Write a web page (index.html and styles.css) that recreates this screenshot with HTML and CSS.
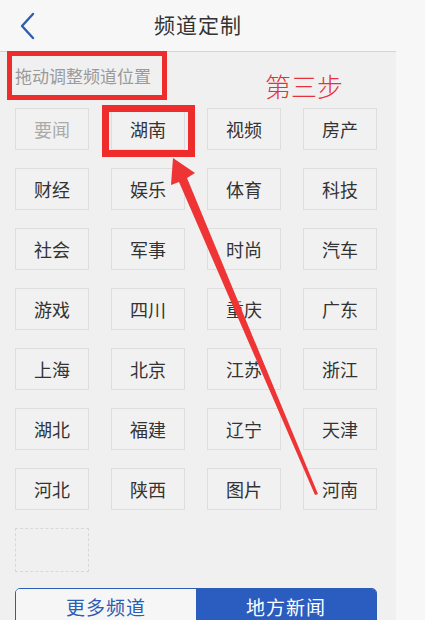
FILE: index.html
```html
<!DOCTYPE html>
<html lang="zh-CN">
<head>
<meta charset="utf-8">
<title>频道定制</title>
<link rel="stylesheet" href="styles.css">
</head>
<body>
<div class="page">
  <div class="main">
    <header class="header">
      <div class="back">
        <svg width="18" height="28" viewBox="0 0 18 28"><path d="M15 2 L4 14 L15 26" fill="none" stroke="#2d5db3" stroke-width="2.4" stroke-linecap="round" stroke-linejoin="round"/></svg>
      </div>
      <h1 class="title">频道定制</h1>
      <div></div>
    </header>
    <div class="hint">拖动调整频道位置</div>
    <div class="grid">
      <div class="tile fixed">要闻</div>
      <div class="tile">湖南</div>
      <div class="tile">视频</div>
      <div class="tile">房产</div>
      <div class="tile">财经</div>
      <div class="tile">娱乐</div>
      <div class="tile">体育</div>
      <div class="tile">科技</div>
      <div class="tile">社会</div>
      <div class="tile">军事</div>
      <div class="tile">时尚</div>
      <div class="tile">汽车</div>
      <div class="tile">游戏</div>
      <div class="tile">四川</div>
      <div class="tile">重庆</div>
      <div class="tile">广东</div>
      <div class="tile">上海</div>
      <div class="tile">北京</div>
      <div class="tile">江苏</div>
      <div class="tile">浙江</div>
      <div class="tile">湖北</div>
      <div class="tile">福建</div>
      <div class="tile">辽宁</div>
      <div class="tile">天津</div>
      <div class="tile">河北</div>
      <div class="tile">陕西</div>
      <div class="tile">图片</div>
      <div class="tile">河南</div>
      <div class="tile empty"></div>
    </div>
    <div class="segment">
      <div class="seg">更多频道</div>
      <div class="seg active">地方新闻</div>
    </div>
  </div>
  <div class="side"></div>
</div>
<div class="overlay">
  <div class="mark mark-hint"></div>
  <div class="mark mark-tile"></div>
  <div class="step">第三步</div>
  <svg class="arrow" width="425" height="620" viewBox="0 0 425 620">
    <polygon points="173,158 195,173 187,178 318,494 315,495 179,182 171,185" fill="#ee3434"/>
  </svg>
</div>
</body>
</html>
```
FILE: styles.css
```css
html, body {
  margin: 0;
  padding: 0;
}
body {
  width: 425px;
  height: 620px;
  overflow: hidden;
  background: #f7f7f7;
  font-family: "Noto Sans CJK SC", "Noto Sans", sans-serif;
  position: relative;
}
.page {
  display: flex;
  height: 620px;
}
.main {
  width: 396px;
  background: #f0f0f0;
  height: 620px;
}
.side {
  flex: 1;
  background: #f7f7f7;
}
.header {
  height: 48px;
  padding-bottom: 3px;
  border-bottom: 1px solid #d4d4d4;
  background: #f7f7f7;
  display: grid;
  grid-template-columns: 1fr auto 1fr;
  align-items: center;
}
.back {
  padding-left: 18px;
  padding-top: 4px;
  display: flex;
}
.title {
  margin: 0;
  font-size: 21px;
  font-weight: 400;
  color: #333;
  letter-spacing: 1px;
}
.hint {
  height: 44px;
  padding: 12px 0 0 15px;
  font-size: 17px;
  line-height: 24px;
  color: #9a9a9a;
}
.grid {
  display: grid;
  grid-template-columns: repeat(4, 74px);
  column-gap: 22px;
  row-gap: 18px;
  padding: 0 15px;
}
.tile {
  height: 42px;
  box-sizing: border-box;
  border: 1px solid #dedede;
  background: #f1f1f1;
  display: flex;
  align-items: center;
  justify-content: center;
  font-size: 18px;
  color: #333;
}
.tile.fixed {
  color: #aaa;
}
.tile.empty {
  height: 44px;
  border: 1px dashed #d8d8d8;
  background: transparent;
}
.segment {
  margin: 16px 19px 0 15px;
  display: flex;
  height: 40px;
  border: 1px solid #2c5db5;
  border-radius: 5px;
  overflow: hidden;
}
.seg {
  flex: 1;
  display: flex;
  align-items: flex-start;
  padding-top: 4px;
  justify-content: center;
  font-size: 19px;
  letter-spacing: 1px;
  color: #2c5db5;
  background: #f6f6f6;
}
.seg.active {
  background: #2b5cbf;
  color: #fff;
}
.overlay {
  position: absolute;
  inset: 0;
  pointer-events: none;
}
.mark {
  position: absolute;
  box-sizing: border-box;
  border-style: solid;
  border-color: #ee2c2c;
}
.mark-hint {
  left: 7px;
  top: 51px;
  width: 160px;
  height: 49px;
  border-width: 5px;
}
.mark-tile {
  left: 102px;
  top: 105px;
  width: 93px;
  height: 52px;
  border-width: 7px;
}
.step {
  position: absolute;
  left: 265px;
  top: 68px;
  font-size: 26px;
  line-height: 36px;
  color: #e8303c;
  font-weight: 300;
}
.arrow {
  position: absolute;
  left: 0;
  top: 0;
}
```
